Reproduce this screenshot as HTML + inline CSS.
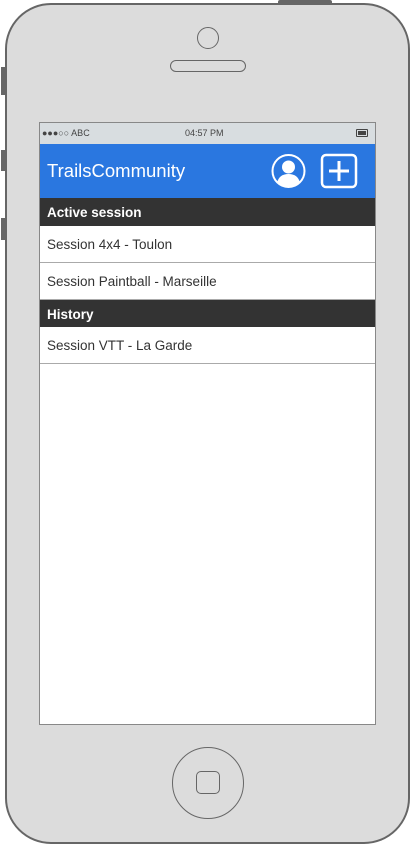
<!DOCTYPE html>
<html><head><meta charset="utf-8"><style>
*{margin:0;padding:0;box-sizing:border-box}
body{width:413px;height:847px;background:#fff;position:relative;overflow:hidden;font-family:"Liberation Sans",sans-serif}
.a{position:absolute}
.phone{left:5px;top:3px;width:405px;height:841px;background:#dcdcdc;border:2px solid #666;border-radius:46px}
.btn{background:#666}
.screen{left:39px;top:122px;width:337px;height:603px;background:#fff;border:1px solid #888}
.row{left:0;width:335px;height:37px;border-bottom:1px solid #aaa;font-size:13.5px;color:#333;padding:12px 0 0 7px;line-height:14px}
.hdr{left:0;width:335px;height:28px;background:#333;color:#fff;font-weight:bold;font-size:13.5px;padding:7px 0 0 7px}
</style></head><body>
<div class="a btn" style="left:278px;top:0;width:54px;height:5px;border-radius:2px"></div>
<div class="a btn" style="left:1px;top:67px;width:5px;height:28px"></div>
<div class="a btn" style="left:1px;top:150px;width:5px;height:21px"></div>
<div class="a btn" style="left:1px;top:218px;width:5px;height:22px"></div>
<div class="a phone"></div>
<div class="a" style="left:197px;top:27px;width:22px;height:22px;border:1.5px solid #666;border-radius:50%"></div>
<div class="a" style="left:170px;top:60px;width:76px;height:12px;border:1.5px solid #666;border-radius:6px"></div>
<div class="a" style="left:172px;top:747px;width:72px;height:72px;border:1.5px solid #666;border-radius:50%"></div>
<div class="a" style="left:196px;top:771px;width:24px;height:23px;border:1.5px solid #666;border-radius:5px"></div>
<div class="a screen">
 <div class="a" style="left:0;top:0;width:335px;height:21px;background:#d8dde0;font-size:9px;color:#444">
  <span class="a" style="left:2px;top:5px">●●●○○ ABC</span>
  <span class="a" style="left:145px;top:5px">04:57 PM</span>
  <span class="a" style="left:316px;top:6px;width:12px;height:8px;border:1px solid #444;border-radius:1px"><span class="a" style="left:1px;top:1px;width:8px;height:4px;background:#444"></span></span>
 </div>
 <div class="a" style="left:0;top:21px;width:335px;height:54px;background:#2a77e0">
  <span class="a" style="left:7px;top:16px;color:#fff;font-size:18.5px">TrailsCommunity</span>
  <svg class="a" style="left:230px;top:9px" width="37" height="36" viewBox="0 0 37 36"><circle cx="18.5" cy="18" r="16" fill="none" stroke="#fff" stroke-width="2"/><circle cx="18.5" cy="14" r="6.5" fill="#fff"/><path d="M7 30 Q9 21 18.5 21 Q28 21 30 30 Q25 34 18.5 34 Q12 34 7 30Z" fill="#fff"/></svg>
  <svg class="a" style="left:280px;top:9px" width="38" height="36" viewBox="0 0 38 36"><rect x="2" y="2" width="34" height="32" rx="4" fill="none" stroke="#fff" stroke-width="2.5"/><path d="M19 8V28M9 18H29" stroke="#fff" stroke-width="3"/></svg>
 </div>
 <div class="a hdr" style="top:75px">Active session</div>
 <div class="a row" style="top:103px">Session 4x4 - Toulon</div>
 <div class="a row" style="top:140px">Session Paintball - Marseille</div>
 <div class="a hdr" style="top:177px;height:27px">History</div>
 <div class="a row" style="top:204px">Session VTT - La Garde</div>
</div>
</body></html>
